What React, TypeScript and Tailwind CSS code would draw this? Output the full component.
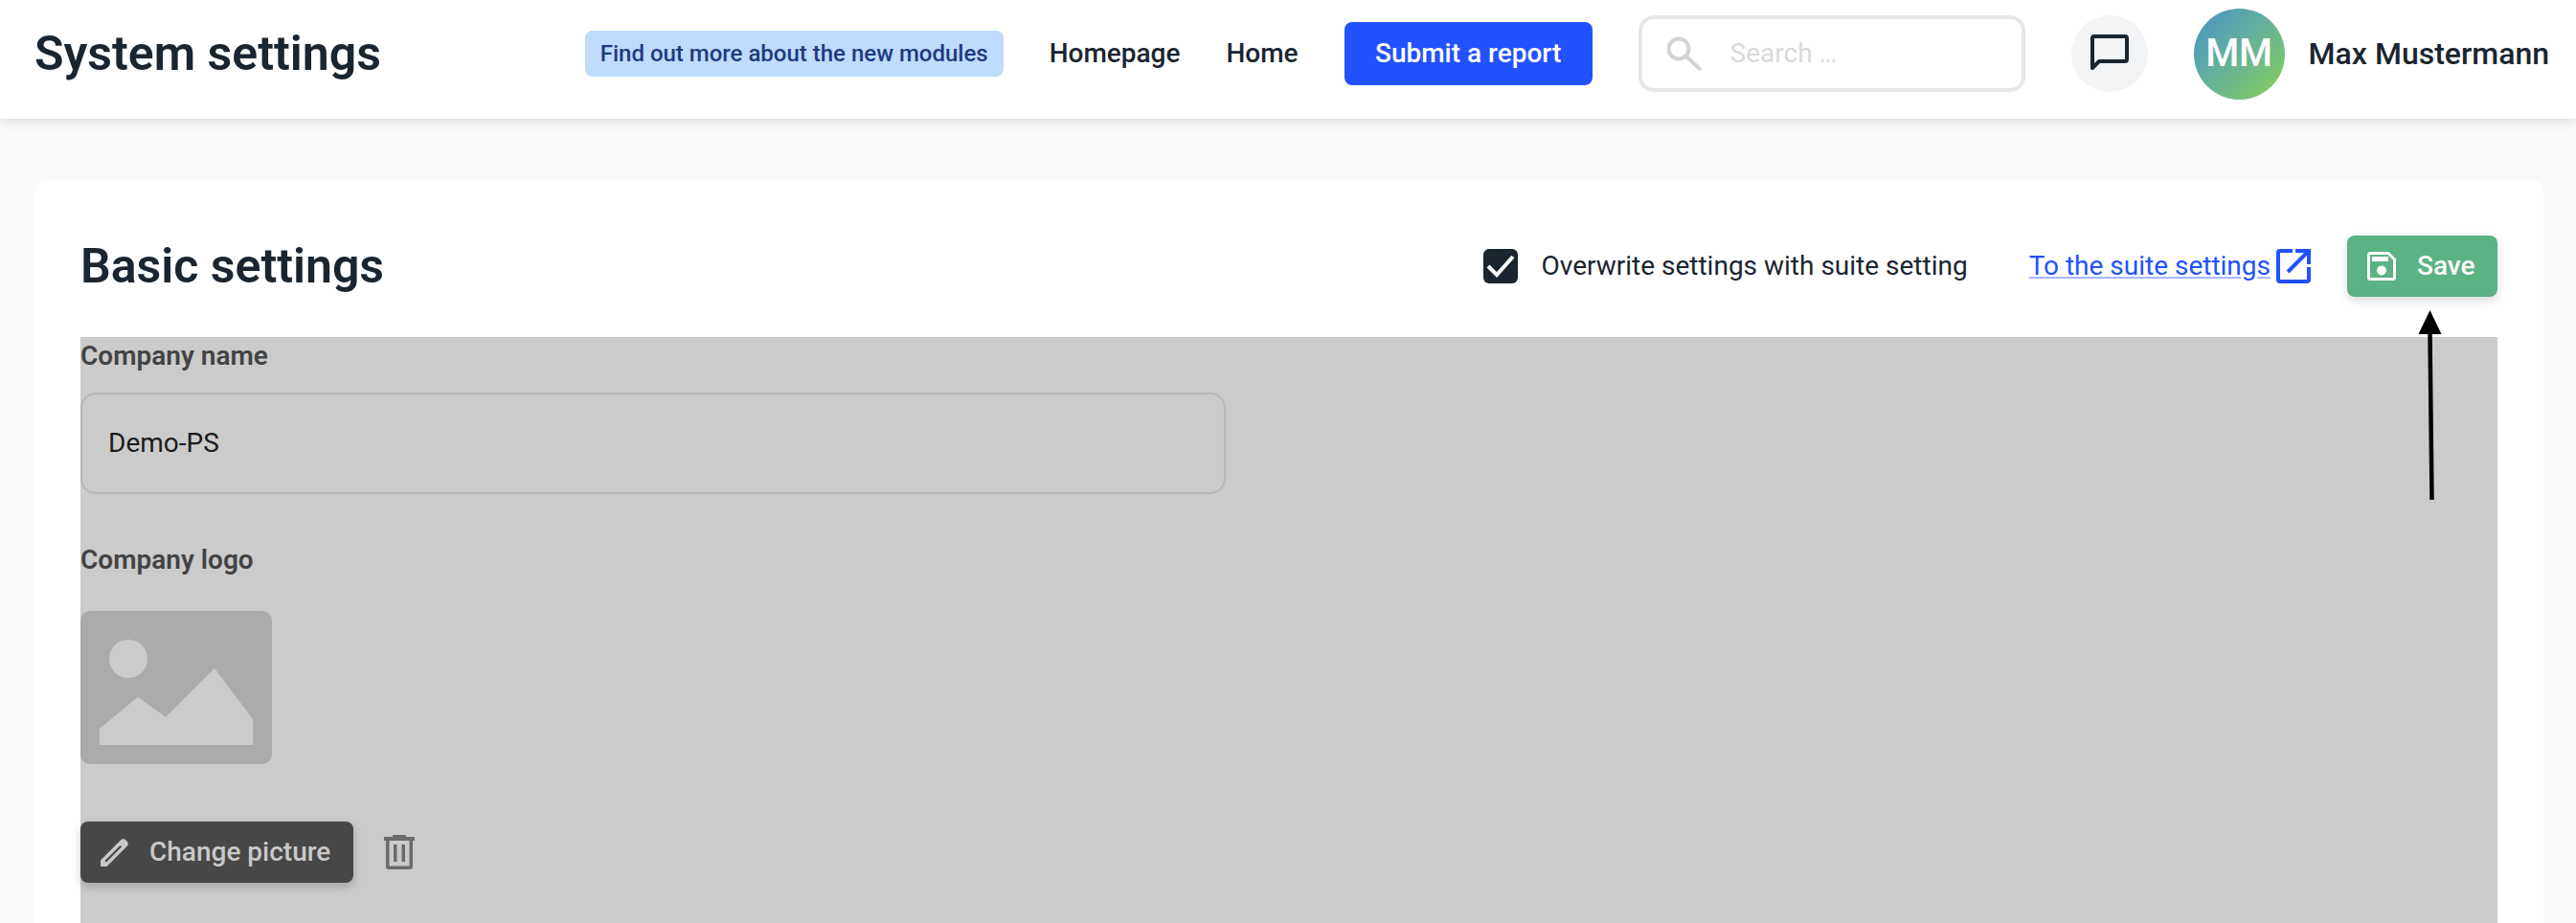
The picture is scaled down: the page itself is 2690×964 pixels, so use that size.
import React from 'react';

const PencilIcon = () => (
  <svg viewBox="0 0 30 30" className="w-[30px] h-[30px]">
    <path
      fill="#c9c9c9"
      fillRule="evenodd"
      d="M0 30V23.5L21 2.5a4 4 0 0 1 5.5 0l1 1a4 4 0 0 1 0 5.5L6.500 30ZM4.500 24 6 25.500 22 9.500 20.500 8Z"
    />
  </svg>
);

const TrashIcon = () => (
  <svg viewBox="0 0 32 36" className="w-[32px] h-[36px]" fill="#6b6b6b">
    <path d="M9 0H23V2H32V6H0V2H9Z" />
    <path fillRule="evenodd" d="M2 6H30V33a3 3 0 0 1-3 3H5a3 3 0 0 1-3-3ZM5.5 6V32.5H26.5V6Z" />
    <path d="M10 10H13.500V28H10ZM18.500 10H22V28H18.500Z" />
  </svg>
);

const SearchIcon = () => (
  <svg viewBox="0 0 36 36" className="w-[36px] h-[36px]" fill="none" stroke="#d3d3d6" strokeWidth="4">
    <circle cx="12" cy="13" r="10.500" />
    <path d="M20 21 34 34" strokeLinecap="round" />
  </svg>
);

const ChatIcon = () => (
  <svg viewBox="0 0 40 40" className="w-[40px] h-[40px]" fill="none" stroke="#1a2530" strokeWidth="4">
    <path d="M4 2H36a2 2 0 0 1 2 2V26a2 2 0 0 1-2 2H9L2 35V4a2 2 0 0 1 2-2Z" strokeLinejoin="round" />
  </svg>
);

const CheckIcon = () => (
  <svg viewBox="0 0 36 36" className="w-9 h-9" fill="none" stroke="#fff" strokeWidth="4">
    <path d="M5 18 14 27 31 8" />
  </svg>
);

const ExternalIcon = () => (
  <svg viewBox="0 0 36 36" className="w-9 h-9" fill="none" stroke="#2251ff" strokeWidth="4">
    <path d="M17 2H4a2 2 0 0 0-2 2V32a2 2 0 0 0 2 2H32a2 2 0 0 0 2-2V19" />
    <path d="M12 24 33 3M20 2H34V16" />
  </svg>
);

const SaveIcon = () => (
  <svg viewBox="0 0 30 30" className="w-[30px] h-[30px]">
    <path
      fill="none"
      stroke="#fff"
      strokeWidth="3"
      strokeLinejoin="round"
      d="M3 1.500H22L28.500 8V27a1.500 1.500 0 0 1-1.500 1.500H3A1.500 1.500 0 0 1 1.500 27V3A1.500 1.500 0 0 1 3 1.500Z"
    />
    <rect x="5" y="5" width="17" height="5" fill="#fff" />
    <circle cx="15" cy="19.500" r="5" fill="#fff" />
  </svg>
);

const PictureIcon = () => (
  <svg viewBox="0 0 200 160" className="w-[200px] h-[160px]">
    <rect width="200" height="160" rx="10" fill="#ababab" />
    <circle cx="50" cy="50" r="20" fill="#cbcbcb" />
    <path d="M20 140V123L60 90 89 111 140 60 180 113V140Z" fill="#cbcbcb" />
  </svg>
);

const NavLink = ({ children }: { children: React.ReactNode }) => (
  <a className="text-[28px] font-medium text-[#1a2530] whitespace-nowrap">{children}</a>
);

export default function App() {
  return (
    <div className="relative h-[964px] overflow-hidden bg-[#f9fafb] font-['Roboto',sans-serif] flex flex-col">
      <header className="h-[124px] shrink-0 bg-white shadow-[0_2px_12px_rgba(0,0,0,0.14)] flex items-center gap-12 pl-9 pr-[28px] pb-3 z-10">
        <h1 className="mr-auto text-[50px] font-semibold text-[#1a2530] leading-none">System settings</h1>
        <div className="h-12 px-4 rounded-[8px] bg-[#bfdbfd] text-[#1e3a7f] text-[24px] font-medium flex items-center whitespace-nowrap">
          Find out more about the new modules
        </div>
        <NavLink>Homepage</NavLink>
        <NavLink>Home</NavLink>
        <button className="h-[66px] w-[259px] rounded-[8px] bg-[#2251ff] text-white text-[28px] font-medium">
          Submit a report
        </button>
        <div className="w-[404px] h-20 rounded-[16px] border-4 border-[#e5e7eb] flex items-center pl-[26px] gap-[30px]">
          <SearchIcon />
          <span className="text-[28px] text-[#d8d9dc]">Search …</span>
        </div>
        <div className="w-20 h-20 rounded-full bg-[#f3f4f6] flex items-center justify-center">
          <ChatIcon />
        </div>
        <div className="flex items-center gap-[25px]">
          <div className="w-[95px] h-[95px] rounded-full bg-gradient-to-br from-[#4a90c8] to-[#88d048] text-white text-[40px] font-medium flex items-center justify-center">
            MM
          </div>
          <span className="text-[32px] font-medium text-[#1a2530] whitespace-nowrap">Max Mustermann</span>
        </div>
      </header>

      <main className="flex-1 min-h-0 mt-16 ml-9 mr-[34px] bg-white rounded-t-[12px] px-12 flex flex-col">
        <div className="h-[164px] shrink-0 flex items-center pt-4">
          <h2 className="mr-auto text-[50px] font-semibold text-[#1a2530] leading-none">Basic settings</h2>
          <div className="w-9 h-9 rounded-[6px] bg-[#1a2530]">
            <CheckIcon />
          </div>
          <span className="ml-[24px] text-[28px] text-[#1a2530]">Overwrite settings with suite setting</span>
          <a className="ml-[64px] text-[28px] text-[#2251ff] underline decoration-[#a5b8ff]">To the suite settings</a>
          <span className="ml-[6px]">
            <ExternalIcon />
          </span>
          <button className="ml-[38px] w-[157px] h-16 rounded-[8px] bg-[#5bb283] text-white text-[28px] font-medium flex items-center pl-[21px] gap-[22px] shadow-[0_4px_10px_rgba(0,0,0,0.15)]">
            <SaveIcon />
            Save
          </button>
        </div>

        <section className="flex-1 bg-[#cbcbcb]">
          <div className="text-[28px] font-semibold text-[#434343] leading-[32px] mt-[4px]">Company name</div>
          <div className="mt-[22px] w-[1196px] h-[106px] rounded-[16px] border-2 border-[#b8b8b8] flex items-center pl-[27px] text-[28px] text-[#1b1b1b]">
            Demo-PS
          </div>
          <div className="mt-[53px] text-[28px] font-semibold text-[#434343] leading-[32px]">Company logo</div>
          <div className="mt-[37px]">
            <PictureIcon />
          </div>
          <div className="mt-[60px] flex items-center gap-8">
            <button className="w-[285px] h-16 rounded-[8px] bg-[#474747] text-[#c9c9c9] text-[28px] font-medium pl-[21px] flex items-center gap-[21px] shadow-[0_4px_10px_rgba(0,0,0,0.2)]">
              <PencilIcon />
              Change picture
            </button>
            <TrashIcon />
          </div>
        </section>
      </main>

      <svg viewBox="0 0 28 200" className="absolute left-[2525px] top-[323px] w-[28px] h-[200px]">
        <path d="M12.500 25 14.500 199" stroke="#000" strokeWidth="4.500" />
        <path d="M12.500 1 24.500 26H0.500Z" fill="#000" />
      </svg>
    </div>
  );
}
